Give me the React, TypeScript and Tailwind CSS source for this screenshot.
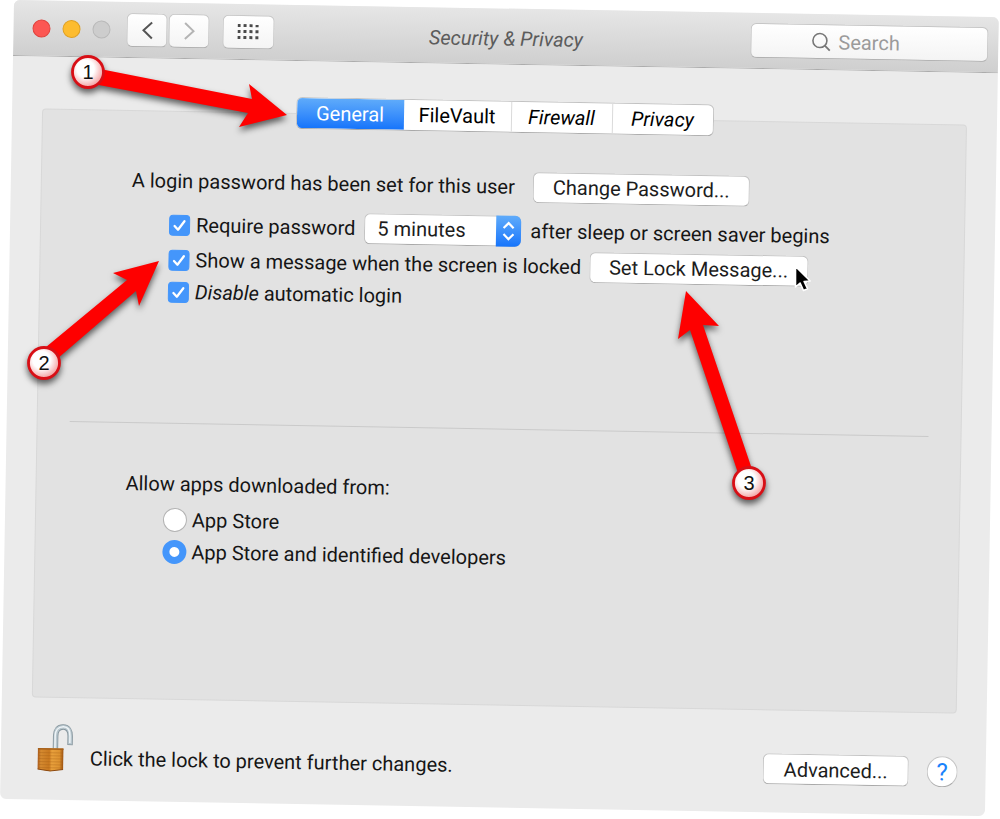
import { useState } from "react";
import type { ReactNode } from "react";

const TABS = [
  { name: "General", width: "w-[107px]" },
  { name: "FileVault", width: "w-[107px]" },
  { name: "Firewall", width: "w-[101px]" },
  { name: "Privacy", width: "w-[101px]" },
];

const ARROWS = [
  {
    label: "1",
    x: 88,
    y: 72,
    points: "90,67 252,99 249,84 287,115 239,127 248,113 88,83",
  },
  {
    label: "2",
    x: 44,
    y: 363,
    points: "40,352 127,280 113,273 159,261 139,306 136,291 50,365",
  },
  {
    label: "3",
    x: 749,
    y: 483,
    points: "742,485 690,330 678,339 686,291 719,326 703,325 754,475",
  },
];

function PushButton({
  children,
  width,
}: {
  children: ReactNode;
  width: string;
}) {
  return (
    <button
      type="button"
      className={`${width} h-[31px] shrink-0 rounded-md border border-[#c3c3c3] border-b-[#a9a9a9] bg-white text-xl leading-7 text-[#1c1c1c]`}
    >
      {children}
    </button>
  );
}

function CheckBox({ id, label }: { id: string; label: ReactNode }) {
  const [checked, setChecked] = useState(true);

  return (
    <div className="flex items-center gap-1.5 whitespace-nowrap">
      <span className="grid size-[21px] place-items-center">
        <input
          id={id}
          type="checkbox"
          checked={checked}
          onChange={(e) => setChecked(e.target.checked)}
          className="col-start-1 row-start-1 size-[21px] appearance-none rounded-[4px] border border-[#b5b5b5] bg-white checked:border-[#4496fb] checked:bg-[#4496fb]"
        />
        {checked && (
          <svg
            viewBox="0 0 21 21"
            className="pointer-events-none col-start-1 row-start-1 size-[21px]"
          >
            <path
              d="M5.500 11.200 9 14.800 15.300 6.200"
              fill="none"
              stroke="white"
              strokeWidth="2.300"
              strokeLinecap="round"
              strokeLinejoin="round"
            />
          </svg>
        )}
      </span>
      <label htmlFor={id}>{label}</label>
    </div>
  );
}

function Padlock() {
  return (
    <svg viewBox="0 0 36 48" className="h-12 w-9 shrink-0">
      <defs>
        <linearGradient id="brass" x1="0" x2="1" y1="0" y2="0">
          <stop offset="0" stopColor="#a8591a" />
          <stop offset="0.12" stopColor="#d58a30" />
          <stop offset="0.45" stopColor="#c8781f" />
          <stop offset="0.55" stopColor="#e8a03c" />
          <stop offset="0.85" stopColor="#dd9230" />
          <stop offset="1" stopColor="#9c5210" />
        </linearGradient>
      </defs>
      <path
        d="M18.500 25V12c0-5.500 2.500-9 7.500-9s7 4 7 9v9"
        fill="none"
        stroke="#84939b"
        strokeWidth="5.400"
      />
      <path
        d="M18.500 25V12c0-5.500 2.500-9 7.500-9s7 4 7 9v8.300"
        fill="none"
        stroke="#b9c7ce"
        strokeWidth="3.800"
      />
      <path
        d="M18 25V12c0-5.500 3-9.200 8.200-9.200s6.600 4 6.600 9.200v7"
        fill="none"
        stroke="#eef4f7"
        strokeWidth="1.500"
      />
      <path d="M1 24.500h25.500v21l-13 2-12.500-2z" fill="url(#brass)" />
      <path
        d="M2 29h24M2 32h24M2 35h24M2 38h24M2 41h24M2 44h24"
        stroke="#a35f16"
        strokeOpacity="0.35"
        strokeWidth="1"
      />
      <path d="M1 24.500h25.500v1.500h-25.500z" fill="#a5601c" />
      <path d="M1 45.500l12.500 1.800 13-1.800" fill="none" stroke="#8c4a12" />
    </svg>
  );
}

function Annotations() {
  return (
    <svg
      viewBox="0 0 1000 819"
      className="pointer-events-none absolute top-0 left-0 h-[819px] w-[1000px]"
    >
      <defs>
        <radialGradient id="badge" cx="0.42" cy="0.4" r="0.62">
          <stop offset="0.45" stopColor="#ffffff" />
          <stop offset="1" stopColor="#f29a9a" />
        </radialGradient>
      </defs>
      <g className="drop-shadow-[0_4px_3px_rgba(0,0,0,0.6)]">
        {ARROWS.map((arrow) => (
          <g key={arrow.label}>
            <polygon points={arrow.points} fill="#fe0000" />
            <circle
              cx={arrow.x}
              cy={arrow.y}
              r="15.500"
              fill="url(#badge)"
              stroke="#d80f16"
              strokeWidth="2.800"
            />
          </g>
        ))}
      </g>
      {ARROWS.map((arrow) => (
        <text
          key={arrow.label}
          x={arrow.x}
          y={arrow.y + 7}
          textAnchor="middle"
          fontSize="20"
          fill="#111"
          className="font-['Liberation_Sans',sans-serif]"
        >
          {arrow.label}
        </text>
      ))}
      {/* mouse pointer */}
      <path
        d="M795.500 266.500v20.500l4.600-4 3.400 7.500 4-1.800-3.400-7.200 6-.5z"
        fill="#000"
        stroke="#fff"
        strokeWidth="1.600"
        strokeLinejoin="round"
      />
    </svg>
  );
}

export default function App() {
  const [tab, setTab] = useState("General");
  const [source, setSource] = useState("identified");

  const radioClass =
    "size-6 shrink-0 appearance-none rounded-full border border-[#b3b3b3] bg-white checked:border-[7px] checked:border-[#4496fb]";
  const navClass =
    "flex h-[34px] items-center justify-center rounded-md border border-[#c9c9c9] border-b-[#b0b0b0] bg-gradient-to-b from-white to-[#f4f4f4]";

  return (
    <div className="relative overflow-hidden bg-white pb-6 font-[Roboto,sans-serif] text-xl leading-7 text-[#151515]">
      <main className="mr-px ml-3.5 origin-top-left rotate-1 rounded-md bg-[#ebebeb]">
        <header className="grid h-14 grid-cols-[1fr_auto_1fr] items-center rounded-t-md border-b border-[#acacac] bg-gradient-to-b from-[#e6e6e6] to-[#cfcfcf]">
          <div className="flex items-center pl-[19px]">
            <div className="flex gap-3">
              <button
                type="button"
                aria-label="Close"
                className="size-[18px] rounded-full border border-[#e0443e] bg-[#fc5753]"
              />
              <button
                type="button"
                aria-label="Minimize"
                className="size-[18px] rounded-full border border-[#dfa023] bg-[#fdbc2f]"
              />
              <button
                type="button"
                aria-label="Zoom"
                disabled
                className="size-[18px] rounded-full border border-[#b9b9b9] bg-[#cdcdcd]"
              />
            </div>
            <div className="ml-4 flex gap-px">
              <button
                type="button"
                aria-label="Back"
                className={`${navClass} w-[41px]`}
              >
                <svg viewBox="0 0 12 20" className="h-5 w-3">
                  <path
                    d="M10.500 2 2 10l8.500 8"
                    fill="none"
                    stroke="#555"
                    strokeWidth="2"
                  />
                </svg>
              </button>
              <button
                type="button"
                aria-label="Forward"
                className={`${navClass} w-[41px]`}
              >
                <svg viewBox="0 0 12 20" className="h-5 w-3">
                  <path
                    d="M1.500 2 10 10l-8.500 8"
                    fill="none"
                    stroke="#b4b4b4"
                    strokeWidth="2"
                  />
                </svg>
              </button>
            </div>
            <button
              type="button"
              aria-label="Show all"
              className={`${navClass} ml-[13px] w-[52px]`}
            >
              <svg viewBox="0 0 22 16" className="h-4 w-[22px]" fill="#4a4a4a">
                {[0, 6, 12].map((y) =>
                  [0, 6, 12, 18].map((x) => (
                    <rect key={`${x}-${y}`} x={x} y={y} width="3" height="3" />
                  ))
                )}
              </svg>
            </button>
          </div>
          <h1 className="pt-1 text-[#5c5c5c] italic">Security &amp; Privacy</h1>
          <div className="mr-2.5 flex h-[35px] w-[238px] items-center gap-[7px] justify-self-end rounded-md border border-[#c6c6c6] border-b-[#b0b0b0] bg-gradient-to-b from-white to-[#f4f4f4] pl-[60px]">
            <svg viewBox="0 0 20 20" className="size-5 shrink-0">
              <circle
                cx="8.500"
                cy="8.500"
                r="7"
                fill="none"
                stroke="#777"
                strokeWidth="1.600"
              />
              <path d="m13.500 13.500 5 5" stroke="#777" strokeWidth="1.800" />
            </svg>
            <input
              type="text"
              aria-label="Search"
              placeholder="Search"
              className="w-full min-w-0 bg-transparent outline-none placeholder:text-[#9b9b9b]"
            />
          </div>
        </header>

        <nav className="relative z-10 flex justify-center pt-9">
          <div className="flex h-8 overflow-hidden rounded-md border border-[#c3c3c3] border-b-[#a9a9a9] bg-white">
            {TABS.map((t) => (
              <button
                key={t.name}
                type="button"
                onClick={() => setTab(t.name)}
                className={`${t.width} leading-7 ${
                  tab === t.name
                    ? "bg-gradient-to-b from-[#5fabfa] to-[#1474fb] text-white"
                    : "text-black"
                } ${
                  t.name === "Firewall" || t.name === "Privacy"
                    ? "border-l border-[#dadada] italic"
                    : ""
                }`}
              >
                {t.name}
              </button>
            ))}
          </div>
        </nav>

        <section className="mx-[30px] -mt-4 rounded-[4px] border border-[#d8d8d8] bg-[#e2e2e2] pt-[53px] pb-[131px]">
          <div className="pl-[90px]">
            <div className="flex h-8 items-center gap-[18px]">
              <p className="whitespace-nowrap">
                A login password has been set for this user
              </p>
              <PushButton width="w-[217px]">Change Password...</PushButton>
            </div>
            <div className="mt-3 flex h-8 items-center gap-[9px] pl-[38px]">
              <CheckBox id="require" label="Require password" />
              <div className="relative w-[157px]">
                <select
                  aria-label="Password delay"
                  defaultValue="5 minutes"
                  className="block h-[31px] w-full appearance-none rounded-md border border-[#c3c3c3] border-b-[#a9a9a9] bg-white pl-3 text-[#1c1c1c]"
                >
                  <option>immediately</option>
                  <option>5 minutes</option>
                  <option>15 minutes</option>
                </select>
                <svg
                  viewBox="0 0 25 31"
                  className="pointer-events-none absolute top-0 right-0 h-[31px] w-[25px] rounded-r-md bg-gradient-to-b from-[#5fabfa] to-[#1474fb]"
                >
                  <path
                    d="m7.500 12.500 5-5 5 5M7.500 18.500l5 5 5-5"
                    fill="none"
                    stroke="white"
                    strokeWidth="2.200"
                  />
                </svg>
              </div>
              <span className="whitespace-nowrap">
                after sleep or screen saver begins
              </span>
            </div>
            <div className="mt-[3px] flex h-8 items-center gap-2 pl-[38px]">
              <CheckBox
                id="message"
                label="Show a message when the screen is locked"
              />
              <PushButton width="w-[219px]">Set Lock Message...</PushButton>
            </div>
            <div className="flex h-8 items-center pl-[38px]">
              <CheckBox
                id="disable"
                label={
                  <>
                    <em>Disable</em> automatic login
                  </>
                }
              />
            </div>
          </div>

          <hr className="mx-8 mt-[115px] border-[#cacaca]" />

          <fieldset className="mt-11 pl-[89px]">
            <legend className="h-8 leading-8">
              Allow apps downloaded from:
            </legend>
            <div className="mt-1 flex h-8 items-center gap-[5px] pl-[38px]">
              <input
                id="store"
                type="radio"
                name="source"
                checked={source === "store"}
                onChange={() => setSource("store")}
                className={radioClass}
              />
              <label htmlFor="store">App Store</label>
            </div>
            <div className="flex h-8 items-center gap-[5px] pl-[38px]">
              <input
                id="identified"
                type="radio"
                name="source"
                checked={source === "identified"}
                onChange={() => setSource("identified")}
                className={radioClass}
              />
              <label htmlFor="identified">
                App Store and identified developers
              </label>
            </div>
          </fieldset>
        </section>

        <footer className="flex items-end pt-[26px] pr-7 pb-7 pl-9">
          <Padlock />
          <p className="ml-[17px] flex-1">
            Click the lock to prevent further changes.
          </p>
          <PushButton width="w-[146px]">Advanced...</PushButton>
          <button
            type="button"
            aria-label="Help"
            className="ml-[18px] size-[31px] rounded-full border border-[#c3c3c3] border-b-[#a9a9a9] bg-white text-2xl leading-7 text-[#1a82fb]"
          >
            ?
          </button>
        </footer>
      </main>
      <Annotations />
    </div>
  );
}
